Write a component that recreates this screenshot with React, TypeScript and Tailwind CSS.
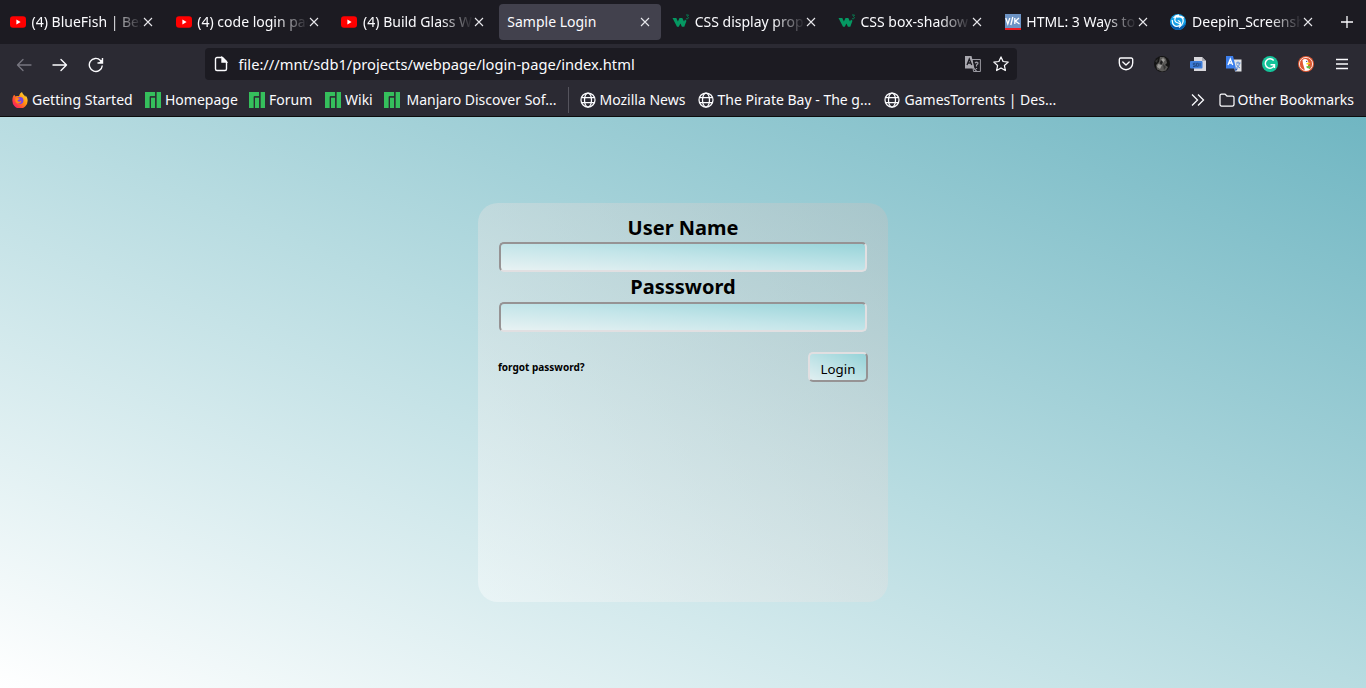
import type { ReactNode } from 'react';

const YouTube = () => (
  <svg width="16" height="16" viewBox="0 0 16 16"><rect x="0" y="2.3" width="16" height="11.4" rx="3" fill="#f00" /><path d="M6.4 5.6v4.8L10.6 8z" fill="#fff" /></svg>
);
const W3 = () => (
  <svg className="-ml-px shrink-0" width="17" height="16" viewBox="0 0 17 16"><path d="M.5 4h3.8l1.600 3.600L7.500 4h2.800l1.700 3.600L13 5.500l1.500 1.300-2.200 6H9.900L8.400 9.400l-1.600 3.400H5z" fill="#059862" /><path d="M14 1h2.500l-1 1.500q1.500.5.5 2-.8.8-2 .1" fill="none" stroke="#077b50" /></svg>
);
const VK = () => (
  <svg width="16" height="16" viewBox="0 0 16 16"><path fill="#6d94c5" d="M0 0h16v14H0z" /><path fill="#ed1c24" d="M0 14h16v2H0z" /><path d="M.8 4l2 6 2-6M7.8 3L5.800 11M9.800 4v6M14 4l-3.500 3.200L14.500 10" fill="none" stroke="#fff" strokeWidth="1.3" /></svg>
);
const Deepin = () => (
  <svg width="16" height="16" viewBox="0 0 16 16"><circle cx="8" cy="8" r="8" fill="#15a0e6" /><path d="M0 8a8 8 0 0 0 16 0c-1 3-4 5-8 5S2 11 0 8z" fill="#075cae" /><path d="M14 4C9 .2 4 3 5 6.800c.8 3 6 1.500 5.600 4.500M2.200 6c0 5 3 8 7.200 5.500 2.500-2 .5-4.500-1.600-5M7 3.200C11 2 14 4 13 8c-.5 2.500-2 4-4 5.500M3.500 4C5 2 6.500 1 9 1.200" fill="none" stroke="#fff" strokeWidth="1.200" /></svg>
);
const Close = () => (
  <svg className="shrink-0" width="10" height="10" viewBox="0 0 10 10"><path d="M1 1l8 8M9 1L1 9" stroke="#e8e8ec" strokeWidth="1.1" /></svg>
);

const tabs: { icon?: ReactNode; title: string; active?: boolean }[] = [
  { icon: <YouTube />, title: '(4) BlueFish | Best' },
  { icon: <YouTube />, title: '(4) code login page' },
  { icon: <YouTube />, title: '(4) Build Glass We' },
  { title: 'Sample Login', active: true },
  { icon: <W3 />, title: 'CSS display prope' },
  { icon: <W3 />, title: 'CSS box-shadow' },
  { icon: <VK />, title: 'HTML: 3 Ways to' },
  { icon: <Deepin />, title: 'Deepin_Screensh' },
];

const Firefox = () => (
  <svg width="16" height="16" viewBox="0 0 16 16">
    <defs><linearGradient id="fox" x1="1" y1="0" x2="0" y2="1"><stop stopColor="#fff44f" /><stop offset=".4" stopColor="#ff980e" /><stop offset=".75" stopColor="#ff3647" /><stop offset="1" stopColor="#e31587" /></linearGradient></defs>
    <path d="M2.200 2.800l1.400 1.700C5 3.800 6 4 7 4.200 7.500 2 8.500.800 10 0c.2 2 2.500 2.800 3.300 5l.2-1.500C15 5 15.800 7 15.600 9A7.600 7.600 0 0 1 .4 9C.2 6.500.9 4.300 2.200 2.800z" fill="url(#fox)" />
    <circle cx="8" cy="8.500" r="3.400" fill="#7542e5" /><path d="M3.400 6.500c2-1 3-.5 4.600.2-1.200 1.300-2.300.8-2.600 2.300 1.500 1 3 .8 4-.4-.2 2.600-2.400 3.600-4.400 2.600C3.200 10 3 8.400 3.400 6.500z" fill="#ff8a16" />
  </svg>
);
const Manjaro = () => (
  <svg width="16" height="16" viewBox="0 0 16 16"><path fill="#35bf5c" d="M0 0h10.200v4.200H4.800V16H0zM5.900 5.500h4.300V16H5.900zM11.500 0H16v16h-4.500z" /><path d="M5.300 16V4.900h5M10.800 0v16" fill="none" stroke="#2b2a33" /></svg>
);
const Globe = () => (
  <svg width="16" height="16" viewBox="0 0 16 16" fill="none" stroke="#fbfbfe" strokeWidth="1.250"><circle cx="8" cy="8" r="7" /><ellipse cx="8" cy="8" rx="3.500" ry="7" /><path d="M1.500 5.500h13M1.500 10.500h13" /></svg>
);

const Bookmark = ({ icon, label, className }: { icon: ReactNode; label: string; className: string }) => (
  <div className={`flex shrink-0 items-center ${className}`}>{icon}<span>{label}</span></div>
);

const TabBar = () => (
  <div className="flex h-11 items-center bg-[#1c1b22]">
    {tabs.map((t) => (
      <div key={t.title} className="flex w-[165.8px] shrink-0 justify-center">
        <div className={`flex h-9 w-[162px] items-center rounded px-2 ${t.active ? 'bg-[#42414d]' : ''}`}>
          {t.icon && <span className="mr-[5.6px] flex w-4 shrink-0">{t.icon}</span>}
          <span className={`min-w-0 flex-1 overflow-hidden whitespace-nowrap ${t.active ? '' : '[mask-image:linear-gradient(to_left,transparent,black_32px)]'}`}>{t.title}</span>
          <span className={t.active ? 'mr-[3px]' : 'ml-px mr-[3px]'}><Close /></span>
        </div>
      </div>
    ))}
    <svg className="ml-[14.6px]" width="12" height="12" viewBox="0 0 12 12"><path d="M6 0v12M0 6h12" stroke="#fbfbfe" strokeWidth="1.300" /></svg>
  </div>
);

const NavBar = () => (
  <div className="flex h-10 items-center pt-px">
    <svg className="ml-4" width="16" height="16" viewBox="0 0 16 16" fill="none" stroke="#777680" strokeWidth="1.300" strokeLinecap="round" strokeLinejoin="round"><path d="M15 8H1.500M7 2.500L1.500 8 7 13.500" /></svg>
    <svg className="ml-5" width="16" height="16" viewBox="0 0 16 16" fill="none" stroke="#fbfbfe" strokeWidth="1.400" strokeLinecap="round" strokeLinejoin="round"><path d="M1 8h13.500M9 2.500L14.500 8 9 13.500" /></svg>
    <svg className="ml-5" width="16" height="16" viewBox="0 0 16 16" fill="none" stroke="#fbfbfe" strokeWidth="1.400"><path d="M14.300 8.500A6.500 6.500 0 1 1 12.500 3.400L14 5M9.500 6H14.500V1" /><path d="M10.500 6L15 1.500V6z" fill="#fbfbfe" stroke="none" /></svg>
    <div className="-mt-px ml-[101px] flex h-8 w-[812px] items-center rounded bg-[#1c1b22]">
      <svg className="ml-2" width="16" height="16" viewBox="0 0 16 16" fill="none" stroke="#fbfbfe" strokeWidth="1.400"><path d="M4 1.500h5.500L13.500 5.500v7.500a1.500 1.500 0 0 1-1.500 1.500H4A1.500 1.500 0 0 1 2.500 13V3A1.500 1.500 0 0 1 4 1.500z" strokeLinejoin="round" /><path d="M9 1.500V6h4.500z" fill="#fbfbfe" /></svg>
      <span className="ml-[9.5px] flex-1 pb-px text-[14.7px]">file:///mnt/sdb1/projects/webpage/login-page/index.html</span>
      <svg className="mr-3" width="16" height="16" viewBox="0 0 16 16"><path d="M7 3.500h8.400v12H8.500z" fill="#1c1b22" stroke="#9b9aa2" /><path d="M0 0h6.500l3 12.500H0z" fill="#a9a8af" /><path d="M2 9l2.300-6L6.700 9M3 7h3" stroke="#1c1b22" strokeWidth="1.300" fill="none" /><path d="M10 7q1.500-1.500 3 0 .2 1-1.500 2v1.500M11.500 12v1M9 12.500l2.500 2.500" stroke="#9b9aa2" strokeWidth="1.200" fill="none" /></svg>
      <svg className="mr-2" width="16" height="16" viewBox="0 0 16 16"><path d="M8 .9l2.100 4.600 5.100.6-3.800 3.400 1 5L8 12l-4.400 2.500 1-5L.8 6.100l5.100-.6z" fill="none" stroke="#fbfbfe" strokeWidth="1.250" strokeLinejoin="round" /></svg>
    </div>
    <div className="-mt-px ml-[101px] flex gap-5">
      <svg width="16" height="16" viewBox="0 0 16 16" fill="none" stroke="#fbfbfe" strokeWidth="1.350" strokeLinecap="round" strokeLinejoin="round"><path d="M2.800 2h10.400a1.500 1.500 0 0 1 1.500 1.500V7a6.700 6.700 0 0 1-13.400 0V3.500A1.500 1.500 0 0 1 2.800 2zM4.800 6L8 9l3.200-3" /></svg>
      <svg width="16" height="16" viewBox="0 0 16 16"><circle cx="8" cy="8" r="8" fill="#141414" /><path d="M6 1l4 0 2 2 1 4-2 2 3 2-2 3.500-4 1-5-2L2 9l3-3z" fill="#5a5957" /><path d="M9 2l2 2-2 3-2-3zM4 8l4 1-2 4-3-2z" fill="#9a9996" /><path d="M9 8l3 3-2 3zM1 5l3-2-1 4z" fill="#363635" /><path d="M7 4l2 2-2 3-1-2z" fill="#1d1d1d" /></svg>
      <svg width="16" height="16" viewBox="0 0 16 16"><path d="M4 1h8l4 4v10H4z" fill="#d8d7dc" /><path d="M12 1v4h4" fill="#aaa9b1" /><rect x="0" y="5" width="12.500" height="7.500" rx="1" fill="#3e7edb" /><path d="M5.500 7.300H3.300v1.600h2v1.600H3M6.500 7.300h1.800v3H6.500zM10 7v3.500" fill="none" stroke="#21477f" strokeWidth=".9" /></svg>
      <svg width="16" height="16" viewBox="0 0 16 16"><path d="M7 3.500h8.500v12H9z" fill="#e1e3e7" /><path d="M0 0h7l3 12.500H0z" fill="#3e80ed" /><path d="M9 12.500h3l-2.500 3z" fill="#2355b7" /><path d="M2 9l2.300-6L6.700 9M3 7h3" stroke="#fff" strokeWidth="1.300" fill="none" /><path d="M10 7h4.500M12 5.500V7M10.500 12q3-2 3-5M10.500 8.500q1 2.500 3.500 3.500" stroke="#5b8bd5" fill="none" /></svg>
      <svg width="16" height="16" viewBox="0 0 16 16"><circle cx="8" cy="8" r="8" fill="#15c39a" /><path d="M11.700 4.500A4.700 4.700 0 1 0 12.500 9M8.500 8.700H12.500V12" fill="none" stroke="#fff" strokeWidth="1.400" /></svg>
      <svg width="16" height="16" viewBox="0 0 16 16"><circle cx="8" cy="8" r="8" fill="#de5833" /><circle cx="8" cy="8" r="6.600" fill="none" stroke="#fff" strokeWidth=".8" /><path d="M4.500 4c3-2.200 6-.2 5.900 3l-.4 3 1.500 4-4.500.4L5 8z" fill="#fff" /><path d="M8.500 7c1.700-.5 3-.4 4 .1-.8 1.500-2.700 1.500-4 1.500z" fill="#fdd20a" /><path d="M8.300 10.300l3.800-.5v3L8.800 12z" fill="#65bc46" /><circle cx="8.700" cy="5.400" r=".65" fill="#2d4f8e" /></svg>
      <svg width="16" height="16" viewBox="0 0 16 16"><path d="M2 3.500h12M2 8h12M2 12.500h12" stroke="#fbfbfe" strokeWidth="1.300" /></svg>
    </div>
  </div>
);

const BookmarkBar = () => (
  <div className="flex h-8 items-center">
    <Bookmark className="ml-3 w-[133px] gap-1" icon={<Firefox />} label="Getting Started" />
    <Bookmark className="w-[104px] gap-1" icon={<Manjaro />} label="Homepage" />
    <Bookmark className="w-[76px] gap-1" icon={<Manjaro />} label="Forum" />
    <Bookmark className="w-[59px] gap-1" icon={<Manjaro />} label="Wiki" />
    <Bookmark className="w-[184px] gap-[6.5px]" icon={<Manjaro />} label="Manjaro Discover Sof..." />
    <div className="mr-[10.5px] h-[26px] w-px bg-[#55545d]" />
    <Bookmark className="w-[118px] gap-1" icon={<Globe />} label="Mozilla News" />
    <Bookmark className="w-[186px] gap-1" icon={<Globe />} label="The Pirate Bay - The g..." />
    <Bookmark className="flex-1 gap-[5px]" icon={<Globe />} label="GamesTorrents | Des..." />
    <svg className="mr-[13px]" width="16" height="16" viewBox="0 0 16 16" fill="none" stroke="#fbfbfe" strokeWidth="1.300"><path d="M2 2.500L7.500 8 2 13.500M8 2.500L13.500 8 8 13.500" /></svg>
    <div className="mr-3 flex items-center gap-[3px]">
      <svg width="16" height="16" viewBox="0 0 16 16"><path d="M1 3.500A1.500 1.500 0 0 1 2.500 2H6l2 2h5.500A1.500 1.500 0 0 1 15 5.500v7a1.500 1.500 0 0 1-1.500 1.500h-11A1.500 1.500 0 0 1 1 12.500z" fill="none" stroke="#fbfbfe" strokeWidth="1.250" /></svg>
      <span>Other Bookmarks</span>
    </div>
  </div>
);

const Field = ({ label, labelClass }: { label: string; labelClass: string }) => (
  <label className="flex flex-col items-center text-[20px] font-bold">
    <span className={labelClass}>{label}</span>
    <input className="h-[30px] w-[368px] rounded-[5px] border-2 border-t-[#969394] border-r-[#e1dfe1] border-b-[#e1dfe1] border-l-[#969394] bg-linear-to-tr/srgb from-[#e8f2f3] via-[#c3e5e9] to-[#98d4d9] outline-none" />
  </label>
);

export default function App() {
  return (
    <div className="flex h-[688px] w-[1366px] flex-col overflow-hidden font-['Noto_Sans',sans-serif]">
      <header className="h-[117px] shrink-0 whitespace-nowrap border-b border-[#0c0c0d] bg-[#2b2a33] text-[14px] leading-5 text-[#fbfbfe]">
        <TabBar />
        <NavBar />
        <BookmarkBar />
      </header>
      <main className="flex flex-1 justify-center bg-linear-to-tr/srgb from-white via-[#b8dce1] to-[#70b6c2] pt-[86px] text-black">
        <form className="h-[399px] w-[410px] rounded-[20px] bg-linear-to-tr/srgb from-white/40 to-[#cac0be]/35 pt-[10px]">
          <Field label="User Name" labelClass="h-[29px] leading-[29px]" />
          <Field label="Passsword" labelClass="h-[30px] leading-[29px]" />
          <div className="mt-5 flex items-center justify-between px-5">
            <span className="text-[10px] font-bold">forgot password?</span>
            <button type="button" className="h-[30px] w-[60px] rounded-[5px] border-2 border-t-[#e1dfe1] border-r-[#969394] border-b-[#969394] border-l-[#e1dfe1] bg-linear-to-tr/srgb from-[#e1eff1] to-[#95d3d8] pt-1.5 text-[13.3px] leading-none">Login</button>
          </div>
        </form>
      </main>
    </div>
  );
}
